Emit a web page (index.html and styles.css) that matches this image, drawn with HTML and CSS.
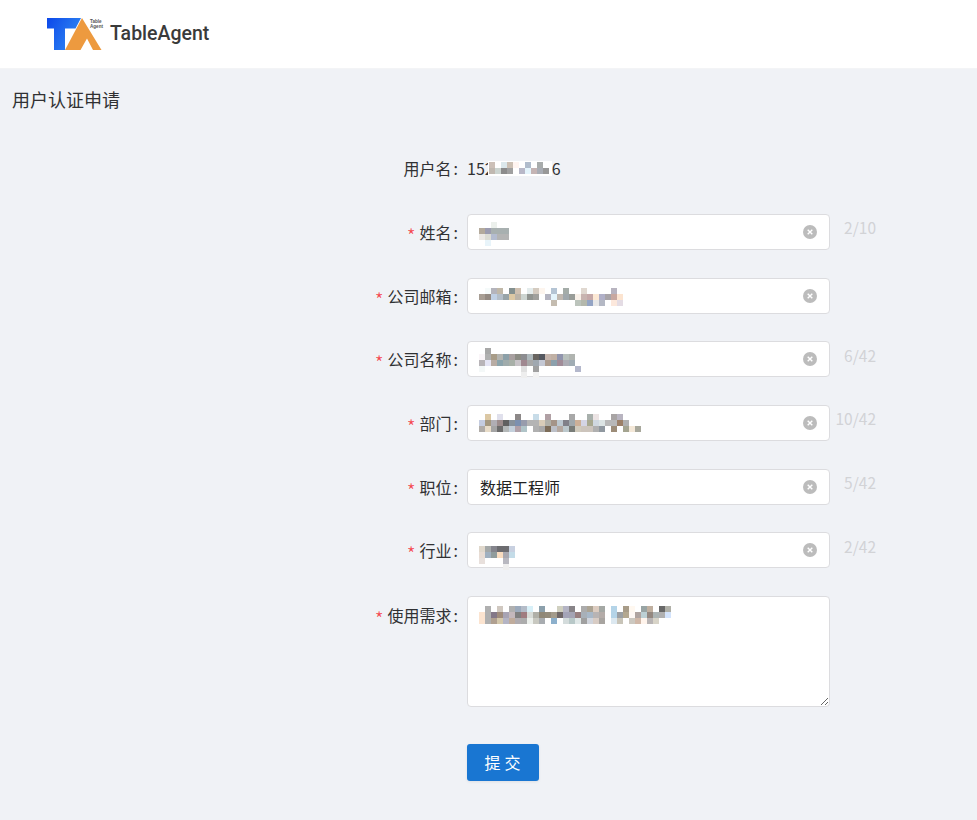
FILE: index.html
```html
<!DOCTYPE html>
<html lang="zh-CN">
<head>
<meta charset="utf-8">
<title>用户认证申请</title>
<link rel="stylesheet" href="styles.css">
</head>
<body>
<header class="topbar">
  <svg class="logo" width="56" height="34" viewBox="0 0 56 34" aria-label="Table Agent">
    <defs><linearGradient id="tg" x1="0" y1="0" x2="1" y2="0.5"><stop offset="0" stop-color="#0c48ea"/><stop offset="1" stop-color="#2f86f2"/></linearGradient></defs>
    <path d="M0 1H34L28.500 11.500H18V33H7V11.500H0Z" fill="url(#tg)"/>
    <path d="M35 1L54.500 33H46L40 21.500L33.500 33H18Z" fill="#ed9a3f"/>
    <text class="logo-mini" x="43" y="5.500">Table</text>
    <text class="logo-mini" x="43" y="10.500">Agent</text>
  </svg>
  <span class="brand">TableAgent</span>
</header>
<main class="page">
  <h1 class="title">用户认证申请</h1>
  <form class="form">
    <div class="row">
      <div class="label">用户名<span class="colon">:</span></div>
      <div class="plain">
        <span>152</span>
        <svg class="m-user" width="64" height="15">
          <rect class="c" x="1" y="1" fill="#ccc0b8"/><rect class="c" x="13" y="1" fill="#dce8ec"/><rect class="c" x="19" y="1" fill="#ccc0b4"/><rect class="c" x="25" y="1" fill="#fff4f0"/><rect class="c" x="37" y="1" fill="#b0bccc"/><rect class="c" x="49" y="1" fill="#a8acac"/>
          <rect class="c" x="1" y="7" fill="#c0b8b0"/><rect class="c" x="7" y="7" fill="#ccd4d0"/><rect class="c" x="13" y="7" fill="#8c8c8c"/><rect class="c" x="19" y="7" fill="#a0a0a0"/><rect class="c" x="31" y="7" fill="#b8b8c8"/><rect class="c" x="37" y="7" fill="#e4f4fc"/><rect class="c" x="43" y="7" fill="#c4b4b4"/><rect class="c" x="49" y="7" fill="#a8acb4"/><rect class="c" x="55" y="7" fill="#989898"/>
        </svg>
        <span>6</span>
      </div>
    </div>

    <div class="row">
      <label class="label"><span class="star">*</span>姓名<span class="colon">:</span></label>
      <div class="field">
        <input class="input" type="text">
        <svg class="mosaic">
          <rect class="c" x="24" y="8" fill="#ecf0ec"/>
          <rect class="c" x="12" y="14" fill="#b4aa9c"/><rect class="c" x="18" y="14" fill="#9c9cb0"/><rect class="c" x="24" y="14" fill="#a8b0b0"/><rect class="c" x="30" y="14" fill="#a8b0b0"/><rect class="c" x="36" y="14" fill="#a8b0b0"/>
          <rect class="c" x="12" y="20" fill="#ece8e4"/><rect class="c" x="18" y="20" fill="#dcdcd4"/><rect class="c" x="24" y="20" fill="#b4bcd0"/><rect class="c" x="30" y="20" fill="#b4b4b4"/><rect class="c" x="36" y="20" fill="#b4b4b4"/>
          <rect class="c" x="18" y="26" fill="#e8f4fa"/>
        </svg>
        <svg class="clear" viewBox="0 0 14 14"><circle cx="7" cy="7" r="7"/><path d="M4.700 4.700L9.300 9.300M9.300 4.700L4.700 9.300"/></svg>
      </div>
      <span class="count">2/10</span>
    </div>

    <div class="row">
      <label class="label"><span class="star">*</span>公司邮箱<span class="colon">:</span></label>
      <div class="field">
        <input class="input" type="text">
        <svg class="mosaic">
          <rect class="c" x="18" y="10" fill="#f5fafa"/><rect class="c" x="24" y="10" fill="#b4b4bc"/><rect class="c" x="30" y="10" fill="#c0b8a8"/><rect class="c" x="42" y="10" fill="#84908f"/><rect class="c" x="48" y="10" fill="#cfc0b0"/><rect class="c" x="60" y="10" fill="#e4ecec"/><rect class="c" x="66" y="10" fill="#d4cbc0"/><rect class="c" x="72" y="10" fill="#fdf5ee"/><rect class="c" x="84" y="10" fill="#b4c4d4"/><rect class="c" x="96" y="10" fill="#a4aca8"/><rect class="c" x="114" y="10" fill="#e0d8d0"/><rect class="c" x="144" y="10" fill="#b8b4c0"/>
          <rect class="c" x="12" y="16" fill="#a89e94"/><rect class="c" x="18" y="16" fill="#948a82"/><rect class="c" x="24" y="16" fill="#c0d0e4"/><rect class="c" x="30" y="16" fill="#b4bec8"/><rect class="c" x="36" y="16" fill="#98a4a8"/><rect class="c" x="42" y="16" fill="#dcc8a4"/><rect class="c" x="48" y="16" fill="#bcb4a8"/><rect class="c" x="54" y="16" fill="#ccd4d0"/><rect class="c" x="60" y="16" fill="#909490"/><rect class="c" x="66" y="16" fill="#a0a09c"/><rect class="c" x="78" y="16" fill="#b4b4c0"/><rect class="c" x="84" y="16" fill="#e4f4fc"/><rect class="c" x="90" y="16" fill="#c0b8b0"/><rect class="c" x="96" y="16" fill="#a0a8ac"/><rect class="c" x="102" y="16" fill="#989c98"/><rect class="c" x="108" y="16" fill="#f8f0e8"/><rect class="c" x="114" y="16" fill="#c8b4b0"/><rect class="c" x="120" y="16" fill="#c4a8a8"/><rect class="c" x="126" y="16" fill="#fce8d4"/><rect class="c" x="132" y="16" fill="#b0b0c8"/><rect class="c" x="138" y="16" fill="#a8a4a8"/><rect class="c" x="144" y="16" fill="#c8a8a0"/><rect class="c" x="150" y="16" fill="#fce4d0"/>
          <rect class="c" x="84" y="22" fill="#c4bcb0"/><rect class="c" x="108" y="22" fill="#bcc4bc"/><rect class="c" x="114" y="22" fill="#b4b8ac"/><rect class="c" x="120" y="22" fill="#94a4c4"/><rect class="c" x="126" y="22" fill="#e8e8e8"/><rect class="c" x="132" y="22" fill="#b4b8c4"/><rect class="c" x="144" y="22" fill="#fce8dc"/><rect class="c" x="150" y="22" fill="#e4dce4"/>
        </svg>
        <svg class="clear" viewBox="0 0 14 14"><circle cx="7" cy="7" r="7"/><path d="M4.700 4.700L9.300 9.300M9.300 4.700L4.700 9.300"/></svg>
      </div>
      <span class="count"></span>
    </div>

    <div class="row">
      <label class="label"><span class="star">*</span>公司名称<span class="colon">:</span></label>
      <div class="field">
        <input class="input" type="text">
        <svg class="mosaic">
          <rect class="c" x="18" y="7" fill="#a8a8a8"/>
          <rect class="c" x="12" y="13" fill="#faf5f8"/><rect class="c" x="18" y="13" fill="#b0b0b0"/><rect class="c" x="24" y="13" fill="#a89c88"/><rect class="c" x="30" y="13" fill="#b4b4b0"/><rect class="c" x="36" y="13" fill="#8ca0a8"/><rect class="c" x="42" y="13" fill="#a8a0a0"/><rect class="c" x="48" y="13" fill="#8c8c84"/><rect class="c" x="54" y="13" fill="#8c8c90"/><rect class="c" x="60" y="13" fill="#aeb8bc"/><rect class="c" x="66" y="13" fill="#686460"/><rect class="c" x="72" y="13" fill="#545860"/><rect class="c" x="78" y="13" fill="#c4b4ac"/><rect class="c" x="84" y="13" fill="#c0b0a4"/><rect class="c" x="90" y="13" fill="#9094ac"/><rect class="c" x="96" y="13" fill="#b8c0bc"/><rect class="c" x="102" y="13" fill="#b0b4b0"/>
          <rect class="c" x="12" y="19" fill="#b8b4b8"/><rect class="c" x="18" y="19" fill="#e4e4f4"/><rect class="c" x="24" y="19" fill="#b8aca4"/><rect class="c" x="30" y="19" fill="#8ca4ac"/><rect class="c" x="36" y="19" fill="#a0acac"/><rect class="c" x="42" y="19" fill="#a8b0a8"/><rect class="c" x="48" y="19" fill="#c8c4c8"/><rect class="c" x="54" y="19" fill="#a08890"/><rect class="c" x="60" y="19" fill="#a8a8a8"/><rect class="c" x="66" y="19" fill="#a0a8b0"/><rect class="c" x="72" y="19" fill="#c4c8d4"/><rect class="c" x="78" y="19" fill="#ac9c90"/><rect class="c" x="84" y="19" fill="#8ca0ac"/><rect class="c" x="90" y="19" fill="#a08c98"/><rect class="c" x="96" y="19" fill="#acacb4"/><rect class="c" x="102" y="19" fill="#a0acb4"/>
          <rect class="c" x="12" y="25" fill="#f4f8f8"/><rect class="c" x="54" y="25" fill="#e0e0e0"/><rect class="c" x="66" y="25" fill="#a0a0a0"/><rect class="c" x="108" y="25" fill="#b4b8cc"/>
          <rect class="c" x="54" y="31" fill="#eeeeee"/><rect class="c" x="66" y="31" fill="#f2f2f2"/>
        </svg>
        <svg class="clear" viewBox="0 0 14 14"><circle cx="7" cy="7" r="7"/><path d="M4.700 4.700L9.300 9.300M9.300 4.700L4.700 9.300"/></svg>
      </div>
      <span class="count">6/42</span>
    </div>

    <div class="row">
      <label class="label"><span class="star">*</span>部门<span class="colon">:</span></label>
      <div class="field">
        <input class="input" type="text">
        <svg class="mosaic">
          <rect class="c" x="18" y="9" fill="#dcc8a4"/><rect class="c" x="30" y="9" fill="#e0e0ec"/><rect class="c" x="48" y="9" fill="#8c8888"/><rect class="c" x="66" y="9" fill="#c8dce8"/><rect class="c" x="78" y="9" fill="#b0a0a4"/><rect class="c" x="102" y="9" fill="#a8a8a8"/><rect class="c" x="120" y="9" fill="#a8b0ac"/><rect class="c" x="126" y="9" fill="#ece4e4"/><rect class="c" x="144" y="9" fill="#a8a4a4"/><rect class="c" x="150" y="9" fill="#b8b4c0"/>
          <rect class="c" x="12" y="15" fill="#c4cce0"/><rect class="c" x="18" y="15" fill="#a49880"/><rect class="c" x="24" y="15" fill="#b0aeb4"/><rect class="c" x="30" y="15" fill="#9c8c8c"/><rect class="c" x="36" y="15" fill="#606060"/><rect class="c" x="42" y="15" fill="#88929c"/><rect class="c" x="48" y="15" fill="#7c90b0"/><rect class="c" x="54" y="15" fill="#989cac"/><rect class="c" x="60" y="15" fill="#b4b4b4"/><rect class="c" x="66" y="15" fill="#b4b4b4"/><rect class="c" x="72" y="15" fill="#d8ccb8"/><rect class="c" x="78" y="15" fill="#b0b0a8"/><rect class="c" x="84" y="15" fill="#a49488"/><rect class="c" x="90" y="15" fill="#bcc8d0"/><rect class="c" x="96" y="15" fill="#808088"/><rect class="c" x="102" y="15" fill="#a0a8ac"/><rect class="c" x="108" y="15" fill="#ccb098"/><rect class="c" x="114" y="15" fill="#d4d4e4"/><rect class="c" x="120" y="15" fill="#a8a890"/><rect class="c" x="126" y="15" fill="#d0d8e0"/><rect class="c" x="132" y="15" fill="#dce4e4"/><rect class="c" x="138" y="15" fill="#b8b8b8"/><rect class="c" x="144" y="15" fill="#b8b8b8"/><rect class="c" x="150" y="15" fill="#9c8068"/><rect class="c" x="156" y="15" fill="#b0b0b0"/>
          <rect class="c" x="12" y="21" fill="#b0aca8"/><rect class="c" x="18" y="21" fill="#e8dcc8"/><rect class="c" x="24" y="21" fill="#a4a4a4"/><rect class="c" x="30" y="21" fill="#6c6c6c"/><rect class="c" x="36" y="21" fill="#b4b8b8"/><rect class="c" x="42" y="21" fill="#c4d0dc"/><rect class="c" x="48" y="21" fill="#b0a0a8"/><rect class="c" x="54" y="21" fill="#b0c4c8"/><rect class="c" x="66" y="21" fill="#b0b0b0"/><rect class="c" x="72" y="21" fill="#a8a8a8"/><rect class="c" x="78" y="21" fill="#7c6c58"/><rect class="c" x="84" y="21" fill="#bcc0c8"/><rect class="c" x="90" y="21" fill="#b4a8a0"/><rect class="c" x="96" y="21" fill="#bcc8cc"/><rect class="c" x="102" y="21" fill="#787c78"/><rect class="c" x="108" y="21" fill="#d0cabc"/><rect class="c" x="114" y="21" fill="#ccc4bc"/><rect class="c" x="120" y="21" fill="#ccc4bc"/><rect class="c" x="126" y="21" fill="#b0b0b0"/><rect class="c" x="132" y="21" fill="#9098a0"/><rect class="c" x="144" y="21" fill="#9c8c78"/><rect class="c" x="156" y="21" fill="#a4a490"/><rect class="c" x="162" y="21" fill="#f4e8d8"/><rect class="c" x="168" y="21" fill="#a8a89c"/>
        </svg>
        <svg class="clear" viewBox="0 0 14 14"><circle cx="7" cy="7" r="7"/><path d="M4.700 4.700L9.300 9.300M9.300 4.700L4.700 9.300"/></svg>
      </div>
      <span class="count">10/42</span>
    </div>

    <div class="row">
      <label class="label"><span class="star">*</span>职位<span class="colon">:</span></label>
      <div class="field">
        <input class="input" type="text" value="数据工程师">
        <svg class="clear" viewBox="0 0 14 14"><circle cx="7" cy="7" r="7"/><path d="M4.700 4.700L9.300 9.300M9.300 4.700L4.700 9.300"/></svg>
      </div>
      <span class="count">5/42</span>
    </div>

    <div class="row">
      <label class="label"><span class="star">*</span>行业<span class="colon">:</span></label>
      <div class="field">
        <input class="input" type="text">
        <svg class="mosaic">
          <rect class="c" x="12" y="14" fill="#e0d8cc"/><rect class="c" x="18" y="14" fill="#a4a8a8"/><rect class="c" x="24" y="14" fill="#84848c"/><rect class="c" x="30" y="14" fill="#6c6c70"/><rect class="c" x="36" y="14" fill="#6c6c70"/><rect class="c" x="42" y="14" fill="#c8d0e0"/>
          <rect class="c" x="12" y="20" fill="#e8dcd4"/><rect class="c" x="18" y="20" fill="#a0b0c0"/><rect class="c" x="24" y="20" fill="#909c9c"/><rect class="c" x="30" y="20" fill="#f8dcc0"/><rect class="c" x="36" y="20" fill="#a8a8b0"/><rect class="c" x="42" y="20" fill="#c4dce8"/>
          <rect class="c" x="12" y="26" fill="#e8e0dc"/><rect class="c" x="36" y="26" fill="#b8b8c0"/>
          <rect class="c" x="36" y="32" fill="#eeeeee"/>
        </svg>
        <svg class="clear" viewBox="0 0 14 14"><circle cx="7" cy="7" r="7"/><path d="M4.700 4.700L9.300 9.300M9.300 4.700L4.700 9.300"/></svg>
      </div>
      <span class="count">2/42</span>
    </div>

    <div class="row row-area">
      <label class="label label-area"><span class="star">*</span>使用需求<span class="colon">:</span></label>
      <div class="field field-area">
        <textarea class="textarea"></textarea>
        <svg class="mosaic">
          <rect class="c" x="18" y="10" fill="#b0b0b0"/><rect class="c" x="30" y="10" fill="#d0c8c0"/><rect class="c" x="42" y="10" fill="#b0b0b0"/><rect class="c" x="48" y="10" fill="#9caabc"/><rect class="c" x="54" y="10" fill="#b4bcc8"/><rect class="c" x="60" y="10" fill="#d8f0f8"/><rect class="c" x="72" y="10" fill="#8ca0ac"/><rect class="c" x="90" y="10" fill="#d0d0c0"/><rect class="c" x="96" y="10" fill="#b4b4c4"/><rect class="c" x="102" y="10" fill="#888488"/><rect class="c" x="114" y="10" fill="#acacac"/><rect class="c" x="120" y="10" fill="#aca494"/><rect class="c" x="126" y="10" fill="#dcccc0"/><rect class="c" x="132" y="10" fill="#a4a8a4"/><rect class="c" x="144" y="10" fill="#b4d4e8"/><rect class="c" x="156" y="10" fill="#a89c88"/><rect class="c" x="162" y="10" fill="#fff8f0"/><rect class="c" x="174" y="10" fill="#98a4a4"/><rect class="c" x="180" y="10" fill="#c0b0a0"/><rect class="c" x="192" y="10" fill="#686868"/><rect class="c" x="198" y="10" fill="#b0b0a8"/>
          <rect class="c" x="12" y="16" fill="#fce4d0"/><rect class="c" x="18" y="16" fill="#b0b0b0"/><rect class="c" x="24" y="16" fill="#847888"/><rect class="c" x="30" y="16" fill="#a08c7c"/><rect class="c" x="36" y="16" fill="#a8a4b4"/><rect class="c" x="42" y="16" fill="#c4b8bc"/><rect class="c" x="48" y="16" fill="#808080"/><rect class="c" x="54" y="16" fill="#a07c80"/><rect class="c" x="60" y="16" fill="#d8dcd8"/><rect class="c" x="66" y="16" fill="#b0b0a8"/><rect class="c" x="72" y="16" fill="#908878"/><rect class="c" x="78" y="16" fill="#948c7c"/><rect class="c" x="84" y="16" fill="#a49c8c"/><rect class="c" x="90" y="16" fill="#706868"/><rect class="c" x="96" y="16" fill="#a4a4b8"/><rect class="c" x="102" y="16" fill="#a4a4b4"/><rect class="c" x="108" y="16" fill="#988080"/><rect class="c" x="114" y="16" fill="#a8b0b8"/><rect class="c" x="120" y="16" fill="#a8b8c8"/><rect class="c" x="126" y="16" fill="#b8b4b4"/><rect class="c" x="132" y="16" fill="#b4aca8"/><rect class="c" x="144" y="16" fill="#b4d4e8"/><rect class="c" x="150" y="16" fill="#9ca0a4"/><rect class="c" x="156" y="16" fill="#b4a890"/><rect class="c" x="162" y="16" fill="#fff8f4"/><rect class="c" x="168" y="16" fill="#b0a4a0"/><rect class="c" x="174" y="16" fill="#bcd0d4"/><rect class="c" x="180" y="16" fill="#948880"/><rect class="c" x="186" y="16" fill="#acb4b4"/><rect class="c" x="192" y="16" fill="#b0b0b0"/><rect class="c" x="198" y="16" fill="#d4e4fc"/>
          <rect class="c" x="12" y="22" fill="#fce4d0"/><rect class="c" x="18" y="22" fill="#b0b0b0"/><rect class="c" x="24" y="22" fill="#b0a090"/><rect class="c" x="30" y="22" fill="#d4c8ac"/><rect class="c" x="36" y="22" fill="#b4b4c4"/><rect class="c" x="42" y="22" fill="#c0ac9c"/><rect class="c" x="48" y="22" fill="#b0acb0"/><rect class="c" x="54" y="22" fill="#acacac"/><rect class="c" x="60" y="22" fill="#ecf0ec"/><rect class="c" x="66" y="22" fill="#c8c8c0"/><rect class="c" x="72" y="22" fill="#a8acb0"/><rect class="c" x="84" y="22" fill="#8cb0cc"/><rect class="c" x="96" y="22" fill="#d4dcdc"/><rect class="c" x="102" y="22" fill="#b8c8c8"/><rect class="c" x="108" y="22" fill="#e0e8e8"/><rect class="c" x="114" y="22" fill="#a0a0a0"/><rect class="c" x="120" y="22" fill="#d0d4dc"/><rect class="c" x="126" y="22" fill="#d8ccc4"/><rect class="c" x="132" y="22" fill="#a8a4a0"/><rect class="c" x="144" y="22" fill="#dce8f0"/><rect class="c" x="150" y="22" fill="#c8c4b8"/><rect class="c" x="162" y="22" fill="#ccc8c0"/><rect class="c" x="168" y="22" fill="#d0b8a8"/><rect class="c" x="174" y="22" fill="#fff4ec"/><rect class="c" x="180" y="22" fill="#b8b4b4"/><rect class="c" x="186" y="22" fill="#d8d4c8"/>
        </svg>
      </div>
      <span class="count"></span>
    </div>

    <div class="actions">
      <button class="submit" type="button">提交</button>
    </div>
  </form>
</main>
</body>
</html>
```
FILE: styles.css
```css
* {
  box-sizing: border-box;
}

html,
body {
  margin: 0;
  height: 100%;
}

body {
  background: #f0f2f6;
  color: #303133;
  font-family: "Noto Sans CJK SC", "Noto Sans", sans-serif;
  font-size: 16px;
  overflow: hidden;
}

.topbar {
  display: flex;
  align-items: center;
  height: 69px;
  padding-left: 47px;
  background: #fff;
  border-bottom: 1px solid #f3f4f6;
}

.logo {
  display: block;
  margin-top: -1px;
  margin-right: 7px;
  overflow: visible;
}

.logo-mini {
  font-family: "Liberation Sans", sans-serif;
  font-size: 4.600px;
  font-weight: 700;
  fill: #555;
}

.brand {
  font-family: Roboto, sans-serif;
  font-size: 19.500px;
  font-weight: 500;
  line-height: 24px;
  color: #3a3a3a;
}

.page {
  padding: 18px 0 0 12px;
}

.title {
  margin: 0 0 39.300px;
  font-size: 18px;
  font-weight: 400;
  line-height: 24px;
}

.row {
  display: flex;
  align-items: center;
  height: 36px;
  margin-bottom: 27.670px;
}

.row-area {
  align-items: flex-start;
  height: 111px;
}

.label {
  width: 455px;
  flex: none;
  padding-right: 8px;
  text-align: right;
  line-height: 24px;
  color: #303133;
  white-space: nowrap;
}

.label-area {
  padding-top: 7px;
}

.colon {
  margin: 0 1px 0 2px;
}

.star {
  display: inline-block;
  margin-right: 4px;
  color: #f5454d;
  font-size: 20px;
  font-weight: 300;
  vertical-align: -5px;
  line-height: 16px;
}

.plain {
  display: flex;
  align-items: center;
  line-height: 24px;
}

.m-user {
  display: block;
  margin-left: -6px;
  background: #fff;
}

.field {
  position: relative;
  width: 363px;
  height: 100%;
  flex: none;
}

.input,
.textarea {
  display: block;
  width: 100%;
  height: 100%;
  padding: 0 12px;
  background: #fff;
  border: 1px solid #dcdcdf;
  border-radius: 4px;
  color: #222;
  font-family: inherit;
  font-size: 16px;
  outline: none;
}

.textarea {
  resize: vertical;
}

.mosaic {
  position: absolute;
  top: 0;
  left: 0;
  width: 100%;
  height: 100%;
  overflow: visible;
  pointer-events: none;
}

.c {
  width: 6px;
  height: 6px;
  shape-rendering: crispEdges;
}

.clear {
  position: absolute;
  top: 50%;
  right: 13px;
  width: 14px;
  height: 14px;
  margin-top: -7px;
}

.clear circle {
  fill: #bcbcbc;
}

.clear path {
  fill: none;
  stroke: #fff;
  stroke-width: 1.400;
}

.count {
  width: 46px;
  flex: none;
  margin-top: -9px;
  text-align: right;
  font-size: 15.500px;
  line-height: 20px;
  color: #d2d3d6;
}

.actions {
  margin: 37px 0 0 455px;
}

.submit {
  display: block;
  width: 72px;
  height: 37px;
  padding: 0 0 0 3px;
  background: #1976d2;
  border: none;
  border-radius: 3px;
  box-shadow: 0 1px 3px rgba(0, 0, 0, 0.08);
  color: #fff;
  font-family: inherit;
  font-size: 16px;
  letter-spacing: 4px;
}
```
